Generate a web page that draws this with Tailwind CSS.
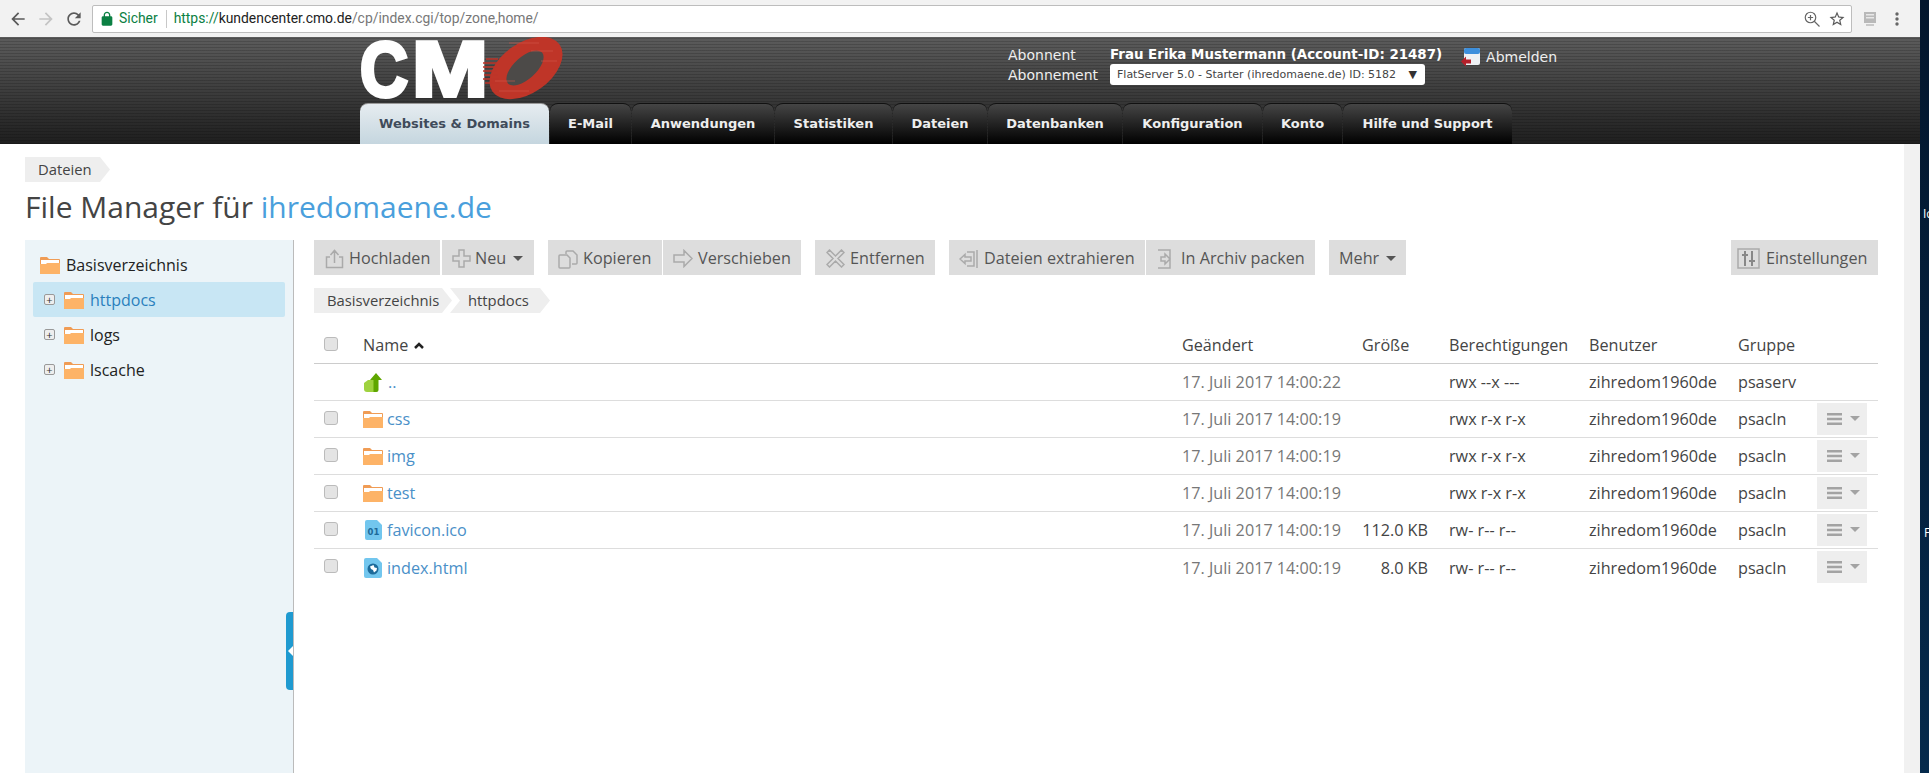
<!DOCTYPE html>
<html lang="de">
<head>
    <meta charset="UTF-8">
    <title>File Manager</title>
    <script src="https://cdn.jsdelivr.net/npm/@tailwindcss/browser@4"></script>
</head>
<body class="h-[773px] overflow-hidden bg-[#04203c] font-['Open_Sans',sans-serif] text-[16px] text-[#444]">
<div class="flex h-[773px]">
    <div class="flex w-[1920px] flex-col">

        <!-- Browser toolbar -->
        <div class="flex h-[37px] items-center bg-[#f2f2f2]">
            <svg class="ml-[8px] h-[20px] w-[20px] fill-[#5a5a5a]" viewBox="0 0 24 24"><path d="M20 11H7.83l5.59-5.59L12 4l-8 8 8 8 1.41-1.41L7.83 13H20v-2z"/></svg>
            <svg class="ml-[8px] h-[20px] w-[20px] fill-[#c4c4c4]" viewBox="0 0 24 24"><path d="M12 4l-1.41 1.41L16.17 11H4v2h12.17l-5.58 5.59L12 20l8-8z"/></svg>
            <svg class="ml-[8px] h-[20px] w-[20px] fill-[#5a5a5a]" viewBox="0 0 24 24"><path d="M17.65 6.35C16.2 4.9 14.21 4 12 4c-4.42 0-7.99 3.58-7.99 8s3.57 8 7.99 8c3.73 0 6.84-2.55 7.73-6h-2.08c-.82 2.33-3.04 4-5.65 4-3.31 0-6-2.69-6-6s2.69-6 6-6c1.66 0 3.14.69 4.22 1.78L13 11h7V4l-2.35 2.35z"/></svg>
            <div class="ml-[8px] flex h-[28px] w-[1760px] items-center rounded-[2px] border border-[#bdbdbd] bg-white font-['Roboto',sans-serif] text-[13.900px]">
                <svg class="ml-[6px] h-[16px] w-[16px] fill-[#0b8043]" viewBox="0 0 24 24"><path d="M18 8h-1V6c0-2.76-2.24-5-5-5S7 3.24 7 6v2H6c-1.1 0-2 .9-2 2v10c0 1.1.9 2 2 2h12c1.1 0 2-.9 2-2V10c0-1.1-.9-2-2-2zM9 6c0-1.66 1.34-3 3-3s3 1.34 3 3v2H9V6z"/></svg>
                <span class="ml-[4px] text-[#0b8043]">Sicher</span>
                <span class="ml-[8px] h-[18px] w-px bg-[#c8c8c8]"></span>
                <span class="ml-[7px] text-[#0b8043]">https://</span><span class="text-[#222]">kundencenter.cmo.de</span><span class="text-[#777]">/cp/index.cgi/top/zone,home/</span>
                <svg class="ml-auto h-[18px] w-[18px] fill-none stroke-[#666] stroke-[1.6]" viewBox="0 0 24 24"><circle cx="10" cy="10" r="7"/><path d="M15 15l7 7M10 6.500v7M6.500 10h7"/></svg>
                <svg class="mr-[5px] ml-[7px] h-[18px] w-[18px] fill-[#5a5a5a]" viewBox="0 0 24 24"><path d="M22 9.240l-7.190-.620L12 2 9.190 8.630 2 9.240l5.460 4.730L5.820 21 12 17.270 18.180 21l-1.630-7.030L22 9.240zM12 15.400l-3.760 2.270 1-4.280-3.320-2.880 4.380-.380L12 6.100l1.710 4.040 4.380.380-3.320 2.880 1 4.280L12 15.400z"/></svg>
            </div>
            <svg class="ml-[11px] h-[16px] w-[14px]" viewBox="0 0 14 16"><rect x="1" y="1" width="12" height="11" fill="#b9b9b9"/><rect x="3" y="3" width="8" height="1.500" fill="#e8e8e8"/><rect x="3" y="6" width="8" height="1.500" fill="#e8e8e8"/><rect x="3" y="13" width="8" height="2" fill="#c9c9c9"/></svg>
            <svg class="ml-[17px] h-[16px] w-[6px] fill-[#666]" viewBox="0 0 6 16"><circle cx="3" cy="3" r="1.700"/><circle cx="3" cy="8" r="1.700"/><circle cx="3" cy="13" r="1.700"/></svg>
        </div>

        <!-- Panel header -->
        <div class="h-[107px] bg-[image:repeating-linear-gradient(0deg,rgba(0,0,0,.16)_0,rgba(0,0,0,.16)_1px,transparent_1px,transparent_3px),linear-gradient(#5c5c5c,#1e1e1e)]">
            <div class="flex h-[66px] pl-[359px]">
                <svg class="h-[64px] w-[204px] shrink-0" viewBox="0 0 204 64">
                    <g font-family="Liberation Sans" font-weight="700" font-size="78" fill="#fff" stroke="#fff" stroke-width="4">
                        <text x="1" y="59" textLength="48" lengthAdjust="spacingAndGlyphs">C</text>
                        <text x="53" y="59" textLength="76" lengthAdjust="spacingAndGlyphs">M</text>
                    </g>
                    <ellipse cx="167" cy="31" rx="41" ry="25" transform="rotate(-35 167 31)" fill="#bf3528"/>
                    <ellipse cx="166" cy="31" rx="23" ry="11" transform="rotate(-42 166 31)" fill="#4c4a48"/>
                    <g stroke="#bf3528" stroke-width="1.500"><path d="M124 30h14M124 34h14M125 38h14M124 42h16M126 46h14M124 26h14M127 22h12"/></g>
                    <g stroke="#d4584a" stroke-width=".6"><path d="M150 6h30M172 14h22M182 24h16M136 44h20M140 54h30"/></g>
                </svg>
                <div class="ml-[445px] grid grid-cols-[102px_auto] content-start pt-[9px] font-['DejaVu_Sans',sans-serif] text-[14px] leading-[18px] text-[#eee]">
                    <span>Abonnent</span>
                    <span class="text-[13.400px] font-bold text-white">Frau Erika Mustermann (Account-ID: 21487)</span>
                    <span class="self-center">Abonnement</span>
                    <span class="flex h-[21px] w-[315px] items-center rounded-[3px] bg-white pl-[7px] text-[11px] whitespace-nowrap text-[#444]">FlatServer 5.0 - Starter (ihredomaene.de) ID: 5182<span class="mr-[8px] ml-auto text-[#333]">▼</span></span>
                </div>
                <div class="ml-[19px] flex h-[30px] items-center self-start pt-[10px] font-['DejaVu_Sans',sans-serif] text-[14px] text-[#eee]">
                    <svg class="h-[20px] w-[20px]" viewBox="0 0 20 20"><rect x="3" y="1" width="16" height="17" rx="2" fill="#eef1f4"/><rect x="3" y="1" width="16" height="6" rx="2" fill="#3d8fdc"/><path d="M0 14.500l5-5v3h5v4H5v3z" fill="#b4202a"/></svg>
                    <span class="ml-[5px]">Abmelden</span>
                </div>
            </div>
            <div class="flex h-[41px] pl-[360px] font-['DejaVu_Sans',sans-serif] text-[13px] font-bold text-[#eee]">
                <span class="flex w-[189px] items-center justify-center rounded-t-[8px] border-t border-[#999] bg-[linear-gradient(#e6ecf0,#c5d6df)] text-[#3f4b5a]">Websites &amp; Domains</span>
                <span class="ml-px flex w-[81px] items-center justify-center rounded-t-[8px] border-t border-[#111] bg-[linear-gradient(#454545,#000)]">E-Mail</span>
                <span class="ml-px flex w-[142px] items-center justify-center rounded-t-[8px] border-t border-[#111] bg-[linear-gradient(#454545,#000)]">Anwendungen</span>
                <span class="ml-px flex w-[117px] items-center justify-center rounded-t-[8px] border-t border-[#111] bg-[linear-gradient(#454545,#000)]">Statistiken</span>
                <span class="ml-px flex w-[94px] items-center justify-center rounded-t-[8px] border-t border-[#111] bg-[linear-gradient(#454545,#000)]">Dateien</span>
                <span class="ml-px flex w-[134px] items-center justify-center rounded-t-[8px] border-t border-[#111] bg-[linear-gradient(#454545,#000)]">Datenbanken</span>
                <span class="ml-px flex w-[139px] items-center justify-center rounded-t-[8px] border-t border-[#111] bg-[linear-gradient(#454545,#000)]">Konfiguration</span>
                <span class="ml-px flex w-[79px] items-center justify-center rounded-t-[8px] border-t border-[#111] bg-[linear-gradient(#454545,#000)]">Konto</span>
                <span class="ml-px flex w-[169px] items-center justify-center rounded-t-[8px] border-t border-[#111] bg-[linear-gradient(#454545,#000)]">Hilfe und Support</span>
            </div>
        </div>

        <!-- Page body + scrollbar -->
        <div class="flex flex-1 overflow-hidden">
            <div class="flex w-[1904px] flex-col bg-white pt-[13px] pr-[26px] pl-[25px]">
                <div class="flex h-[25px] w-[85px] items-center bg-[#eee] pl-[13px] text-[14.800px] [clip-path:polygon(0_0,calc(100%-10px)_0,100%_50%,calc(100%-10px)_100%,0_100%)]">Dateien</div>
                <h1 class="mb-[10px] flex h-[48px] items-center text-[30px] font-normal text-[#444]">File Manager für&nbsp;<span class="text-[#4a9fdc]">ihredomaene.de</span></h1>

                <div class="flex flex-1">
                    <!-- Folder tree -->
                    <div class="relative w-[269px] shrink-0 border-r border-[#bbb] bg-[#ecf4f8] pt-[7px] pl-[8px] text-[#222]">
                        <div class="flex h-[35px] items-center pl-[7px]">
                            <svg class="h-[18px] w-[20px]" viewBox="0 0 20 18"><path d="M0 2a1 1 0 0 1 1-1h6l2 2h10a1 1 0 0 1 1 1v13a1 1 0 0 1-1 1H1a1 1 0 0 1-1-1z" fill="#f09c55"/><path d="M1 4h18v3H8L6 8H1z" fill="#fff"/><path d="M0 8h6l2-1h12v10a1 1 0 0 1-1 1H1a1 1 0 0 1-1-1z" fill="#fdb367"/></svg>
                            <span class="ml-[6px]">Basisverzeichnis</span>
                        </div>
                        <div class="flex h-[35px] w-[252px] items-center rounded-[2px] bg-[#c8e6f4] pl-[11px] text-[#2a80bd]">
                            <span class="flex h-[11px] w-[11px] items-center justify-center rounded-[2px] border border-[#999] bg-[#eee] text-[11px] leading-none text-[#333]">+</span>
                            <svg class="ml-[9px] h-[18px] w-[20px]" viewBox="0 0 20 18"><path d="M0 2a1 1 0 0 1 1-1h6l2 2h10a1 1 0 0 1 1 1v13a1 1 0 0 1-1 1H1a1 1 0 0 1-1-1z" fill="#f09c55"/><path d="M1 4h18v3H8L6 8H1z" fill="#fff"/><path d="M0 8h6l2-1h12v10a1 1 0 0 1-1 1H1a1 1 0 0 1-1-1z" fill="#fdb367"/></svg>
                            <span class="ml-[6px]">httpdocs</span>
                        </div>
                        <div class="flex h-[35px] items-center pl-[11px]">
                            <span class="flex h-[11px] w-[11px] items-center justify-center rounded-[2px] border border-[#999] bg-[#eee] text-[11px] leading-none text-[#333]">+</span>
                            <svg class="ml-[9px] h-[18px] w-[20px]" viewBox="0 0 20 18"><path d="M0 2a1 1 0 0 1 1-1h6l2 2h10a1 1 0 0 1 1 1v13a1 1 0 0 1-1 1H1a1 1 0 0 1-1-1z" fill="#f09c55"/><path d="M1 4h18v3H8L6 8H1z" fill="#fff"/><path d="M0 8h6l2-1h12v10a1 1 0 0 1-1 1H1a1 1 0 0 1-1-1z" fill="#fdb367"/></svg>
                            <span class="ml-[6px]">logs</span>
                        </div>
                        <div class="flex h-[35px] items-center pl-[11px]">
                            <span class="flex h-[11px] w-[11px] items-center justify-center rounded-[2px] border border-[#999] bg-[#eee] text-[11px] leading-none text-[#333]">+</span>
                            <svg class="ml-[9px] h-[18px] w-[20px]" viewBox="0 0 20 18"><path d="M0 2a1 1 0 0 1 1-1h6l2 2h10a1 1 0 0 1 1 1v13a1 1 0 0 1-1 1H1a1 1 0 0 1-1-1z" fill="#f09c55"/><path d="M1 4h18v3H8L6 8H1z" fill="#fff"/><path d="M0 8h6l2-1h12v10a1 1 0 0 1-1 1H1a1 1 0 0 1-1-1z" fill="#fdb367"/></svg>
                            <span class="ml-[6px]">lscache</span>
                        </div>
                        <!-- collapse handle -->
                        <div class="absolute top-[372px] right-0 flex h-[78px] w-[7px] items-center justify-end rounded-l-[4px] bg-[#1f9ad0]">
                            <span class="h-0 w-0 border-y-[5px] border-r-[5px] border-y-transparent border-r-white"></span>
                        </div>
                    </div>

                    <!-- File list -->
                    <div class="ml-[20px] flex-1 text-[16.200px]">
                        <div class="flex h-[35px] text-[#555] [&>div]:pt-[2px]">
                            <div class="flex w-[126px] items-center bg-[#ddd] pl-[11px]">
                                <svg class="mr-[5px] h-[20px] w-[19px] fill-none stroke-[#aaa] stroke-[1.500]" viewBox="0 0 19 20"><path d="M5 8H1.500v10.500h16V8H14M9.500 14V2M5.500 6l4-4.500 4 4.500"/></svg>Hochladen
                            </div>
                            <div class="ml-[2px] flex w-[92px] items-center bg-[#ddd] pl-[10px]">
                                <svg class="mr-[4px] h-[19px] w-[19px] fill-none stroke-[#aaa] stroke-[1.500]" viewBox="0 0 19 19"><path d="M7 1h5v6h6v5h-6v6H7v-6H1V7h6z"/></svg>Neu<span class="ml-[7px] h-0 w-0 border-x-[5px] border-t-[5px] border-x-transparent border-t-[#555]"></span>
                            </div>
                            <div class="ml-[14px] flex w-[114px] items-center bg-[#ddd] pl-[10px]">
                                <svg class="mr-[5px] h-[20px] w-[20px] fill-none stroke-[#aaa] stroke-[1.500]" viewBox="0 0 20 20"><path d="M8 5V3a1 1 0 0 1 1-1h6l4 4v8a1 1 0 0 1-1 1h-4M2 6h7l3 3v9a1 1 0 0 1-1 1H2a1 1 0 0 1-1-1V7a1 1 0 0 1 1-1z"/></svg>Kopieren
                            </div>
                            <div class="ml-px flex w-[138px] items-center bg-[#ddd] pl-[10px]">
                                <svg class="mr-[5px] h-[19px] w-[20px] fill-none stroke-[#aaa] stroke-[1.500]" viewBox="0 0 20 19"><path d="M1 6h10V1.500l8 8-8 8V13H1z"/></svg>Verschieben
                            </div>
                            <div class="ml-[14px] flex w-[120px] items-center bg-[#ddd] pl-[11px]">
                                <svg class="mr-[5px] h-[19px] w-[19px] fill-none stroke-[#aaa] stroke-[1.500]" viewBox="0 0 19 19"><path d="M3.500 1L9.500 7l6-6 2.500 2.500-6 6 6 6-2.500 2.500-6-6-6 6L1 15.500l6-6-6-6z"/></svg>Entfernen
                            </div>
                            <div class="ml-[14px] flex w-[196px] items-center bg-[#ddd] pl-[10px]">
                                <svg class="mr-[6px] h-[20px] w-[19px] fill-none stroke-[#aaa] stroke-[1.500]" viewBox="0 0 19 20"><path d="M8 3h7v14H8M1 10l5-4.500V8h6v4H6v2.500zM18 1v18"/></svg>Dateien extrahieren
                            </div>
                            <div class="ml-px flex w-[169px] items-center bg-[#ddd] pl-[11px]">
                                <svg class="mr-[7px] h-[20px] w-[17px] fill-none stroke-[#aaa] stroke-[1.500]" viewBox="0 0 17 20"><path d="M1 1h12v18H1M4 8h4V5l5 5-5 5v-3H4z"/></svg>In Archiv packen
                            </div>
                            <div class="ml-[14px] flex w-[77px] items-center bg-[#ddd] pl-[10px]">
                                Mehr<span class="ml-[7px] h-0 w-0 border-x-[5px] border-t-[5px] border-x-transparent border-t-[#555]"></span>
                            </div>
                            <div class="ml-auto flex w-[147px] items-center bg-[#ddd] pl-[6px]">
                                <svg class="mr-[6px] h-[21px] w-[23px]" viewBox="0 0 23 21"><rect x="1" y="1" width="21" height="19" fill="none" stroke="#aaa" stroke-width="1.500"/><path d="M8 3v15M15 3v15M5 7h6M12 13h6" stroke="#888" stroke-width="2" fill="none"/></svg>Einstellungen
                            </div>
                        </div>

                        <div class="mt-[13px] flex h-[25px] text-[14.800px]">
                            <div class="flex w-[138px] items-center bg-[#eee] pl-[13px] [clip-path:polygon(0_0,calc(100%-10px)_0,100%_50%,calc(100%-10px)_100%,0_100%)]">Basisverzeichnis</div>
                            <div class="-ml-[2px] flex w-[100px] items-center bg-[#eee] pl-[18px] [clip-path:polygon(0_0,calc(100%-10px)_0,100%_50%,calc(100%-10px)_100%,0_100%,10px_50%)]">httpdocs</div>
                        </div>

                        <table class="mt-[12px] w-full table-fixed text-left [&_td]:pt-[2px] [&_td:first-child]:pt-0 [&_td:last-child]:pt-0 [&_th]:pt-[2px]">
                            <colgroup>
                                <col class="w-[49px]"><col class="w-[819px]"><col class="w-[180px]"><col class="w-[87px]"><col class="w-[140px]"><col class="w-[149px]"><col class="w-[79px]"><col class="w-[61px]">
                            </colgroup>
                            <thead>
                                <tr class="h-[38px] border-b border-[#ccc]">
                                    <th class="pl-[10px] font-normal"><span class="mb-[2px] block h-[14px] w-[14px] rounded-[3px] border border-[#bbb] bg-[#e4e4e4]"></span></th>
                                    <th class="font-normal">Name <span class="ml-[2px] inline-block h-[7px] w-[10px] align-[2px]"><svg class="h-[7px] w-[10px] fill-none stroke-[#222] stroke-[2.500]" viewBox="0 0 10 7"><path d="M1 6l4-4 4 4"/></svg></span></th>
                                    <th class="font-normal">Geändert</th>
                                    <th class="font-normal">Größe</th>
                                    <th class="font-normal">Berechtigungen</th>
                                    <th class="font-normal">Benutzer</th>
                                    <th class="font-normal">Gruppe</th>
                                    <th></th>
                                </tr>
                            </thead>
                            <tbody>
                                <tr class="h-[37px] border-b border-[#ddd]">
                                    <td></td>
                                    <td><span class="flex items-center text-[#4a90c8]"><svg class="mr-[6px] ml-px h-[19px] w-[18px]" viewBox="0 0 18 19"><path d="M0 10l4-3h6v12H3a3 3 0 0 1-3-3z" fill="#9fd23f"/><path d="M12 0l6 7h-3.500v10a2 2 0 0 1-2 2H9.500V7H6z" fill="#5fa600"/></svg>..</span></td>
                                    <td class="text-[#777]">17. Juli 2017 14:00:22</td>
                                    <td class="pr-[21px] text-right"></td>
                                    <td>rwx --x ---</td>
                                    <td>zihredom1960de</td>
                                    <td>psaserv</td>
                                    <td></td>
                                </tr>
                                <tr class="h-[37px] border-b border-[#ddd]">
                                    <td class="pl-[10px]"><span class="mb-[2px] block h-[14px] w-[14px] rounded-[3px] border border-[#bbb] bg-[#e4e4e4]"></span></td>
                                    <td><span class="flex items-center text-[#4a90c8]"><svg class="mr-[4px] h-[18px] w-[20px]" viewBox="0 0 20 18"><path d="M0 2a1 1 0 0 1 1-1h6l2 2h10a1 1 0 0 1 1 1v13a1 1 0 0 1-1 1H1a1 1 0 0 1-1-1z" fill="#f09c55"/><path d="M1 4h18v3H8L6 8H1z" fill="#fff"/><path d="M0 8h6l2-1h12v10a1 1 0 0 1-1 1H1a1 1 0 0 1-1-1z" fill="#fdb367"/></svg>css</span></td>
                                    <td class="text-[#777]">17. Juli 2017 14:00:19</td>
                                    <td class="pr-[21px] text-right"></td>
                                    <td>rwx r-x r-x</td>
                                    <td>zihredom1960de</td>
                                    <td>psacln</td>
                                    <td><span class="flex h-[32px] w-[50px] items-center bg-[#eee] pl-[10px]"><svg class="h-[12px] w-[15px] fill-[#a3a3a3]" viewBox="0 0 15 12"><rect width="15" height="2.500"/><rect y="4.750" width="15" height="2.500"/><rect y="9.500" width="15" height="2.500"/></svg><span class="ml-[8px] h-0 w-0 border-x-[5px] border-t-[5px] border-x-transparent border-t-[#a3a3a3]"></span></span></td>
                                </tr>
                                <tr class="h-[37px] border-b border-[#ddd]">
                                    <td class="pl-[10px]"><span class="mb-[2px] block h-[14px] w-[14px] rounded-[3px] border border-[#bbb] bg-[#e4e4e4]"></span></td>
                                    <td><span class="flex items-center text-[#4a90c8]"><svg class="mr-[4px] h-[18px] w-[20px]" viewBox="0 0 20 18"><path d="M0 2a1 1 0 0 1 1-1h6l2 2h10a1 1 0 0 1 1 1v13a1 1 0 0 1-1 1H1a1 1 0 0 1-1-1z" fill="#f09c55"/><path d="M1 4h18v3H8L6 8H1z" fill="#fff"/><path d="M0 8h6l2-1h12v10a1 1 0 0 1-1 1H1a1 1 0 0 1-1-1z" fill="#fdb367"/></svg>img</span></td>
                                    <td class="text-[#777]">17. Juli 2017 14:00:19</td>
                                    <td class="pr-[21px] text-right"></td>
                                    <td>rwx r-x r-x</td>
                                    <td>zihredom1960de</td>
                                    <td>psacln</td>
                                    <td><span class="flex h-[32px] w-[50px] items-center bg-[#eee] pl-[10px]"><svg class="h-[12px] w-[15px] fill-[#a3a3a3]" viewBox="0 0 15 12"><rect width="15" height="2.500"/><rect y="4.750" width="15" height="2.500"/><rect y="9.500" width="15" height="2.500"/></svg><span class="ml-[8px] h-0 w-0 border-x-[5px] border-t-[5px] border-x-transparent border-t-[#a3a3a3]"></span></span></td>
                                </tr>
                                <tr class="h-[37px] border-b border-[#ddd]">
                                    <td class="pl-[10px]"><span class="mb-[2px] block h-[14px] w-[14px] rounded-[3px] border border-[#bbb] bg-[#e4e4e4]"></span></td>
                                    <td><span class="flex items-center text-[#4a90c8]"><svg class="mr-[4px] h-[18px] w-[20px]" viewBox="0 0 20 18"><path d="M0 2a1 1 0 0 1 1-1h6l2 2h10a1 1 0 0 1 1 1v13a1 1 0 0 1-1 1H1a1 1 0 0 1-1-1z" fill="#f09c55"/><path d="M1 4h18v3H8L6 8H1z" fill="#fff"/><path d="M0 8h6l2-1h12v10a1 1 0 0 1-1 1H1a1 1 0 0 1-1-1z" fill="#fdb367"/></svg>test</span></td>
                                    <td class="text-[#777]">17. Juli 2017 14:00:19</td>
                                    <td class="pr-[21px] text-right"></td>
                                    <td>rwx r-x r-x</td>
                                    <td>zihredom1960de</td>
                                    <td>psacln</td>
                                    <td><span class="flex h-[32px] w-[50px] items-center bg-[#eee] pl-[10px]"><svg class="h-[12px] w-[15px] fill-[#a3a3a3]" viewBox="0 0 15 12"><rect width="15" height="2.500"/><rect y="4.750" width="15" height="2.500"/><rect y="9.500" width="15" height="2.500"/></svg><span class="ml-[8px] h-0 w-0 border-x-[5px] border-t-[5px] border-x-transparent border-t-[#a3a3a3]"></span></span></td>
                                </tr>
                                <tr class="h-[37px] border-b border-[#ddd]">
                                    <td class="pl-[10px]"><span class="mb-[2px] block h-[14px] w-[14px] rounded-[3px] border border-[#bbb] bg-[#e4e4e4]"></span></td>
                                    <td><span class="flex items-center text-[#4a90c8]"><svg class="mr-[4px] ml-[2px] h-[20px] w-[18px]" viewBox="0 0 18 20"><path d="M2 0h10l5 5v13a2 2 0 0 1-2 2H2a2 2 0 0 1-2-2V2a2 2 0 0 1 2-2z" fill="#72c6ee"/><text x="8.500" y="15" text-anchor="middle" font-family="DejaVu Sans" font-size="8.500" font-weight="700" fill="#1c6a9a">01</text></svg>favicon.ico</span></td>
                                    <td class="text-[#777]">17. Juli 2017 14:00:19</td>
                                    <td class="pr-[21px] text-right">112.0 KB</td>
                                    <td>rw- r-- r--</td>
                                    <td>zihredom1960de</td>
                                    <td>psacln</td>
                                    <td><span class="flex h-[32px] w-[50px] items-center bg-[#eee] pl-[10px]"><svg class="h-[12px] w-[15px] fill-[#a3a3a3]" viewBox="0 0 15 12"><rect width="15" height="2.500"/><rect y="4.750" width="15" height="2.500"/><rect y="9.500" width="15" height="2.500"/></svg><span class="ml-[8px] h-0 w-0 border-x-[5px] border-t-[5px] border-x-transparent border-t-[#a3a3a3]"></span></span></td>
                                </tr>
                                <tr class="h-[37px]">
                                    <td class="pl-[10px]"><span class="mb-[2px] block h-[14px] w-[14px] rounded-[3px] border border-[#bbb] bg-[#e4e4e4]"></span></td>
                                    <td><span class="flex items-center text-[#4a90c8]"><svg class="mr-[4px] ml-[1px] h-[20px] w-[19px]" viewBox="0 0 19 20"><path d="M2 0h11l5 5v13a2 2 0 0 1-2 2H2a2 2 0 0 1-2-2V2a2 2 0 0 1 2-2z" fill="#72c6ee"/><circle cx="9" cy="11" r="5.500" fill="#1c6a9a"/><path d="M6 8.500l3.500-1.500 1 2.500 2.500.500-.500 2.500-2.500 2-1-2.500-2-1z" fill="#fff"/></svg>index.html</span></td>
                                    <td class="text-[#777]">17. Juli 2017 14:00:19</td>
                                    <td class="pr-[21px] text-right">8.0 KB</td>
                                    <td>rw- r-- r--</td>
                                    <td>zihredom1960de</td>
                                    <td>psacln</td>
                                    <td><span class="flex h-[32px] w-[50px] items-center bg-[#eee] pl-[10px]"><svg class="h-[12px] w-[15px] fill-[#a3a3a3]" viewBox="0 0 15 12"><rect width="15" height="2.500"/><rect y="4.750" width="15" height="2.500"/><rect y="9.500" width="15" height="2.500"/></svg><span class="ml-[8px] h-0 w-0 border-x-[5px] border-t-[5px] border-x-transparent border-t-[#a3a3a3]"></span></span></td>
                                </tr>
                            </tbody>
                        </table>
                    </div>
                </div>
            </div>
            <div class="w-[16px] bg-[#f1f1f1]"></div>
        </div>
    </div>

    <!-- Sliver of desktop behind the browser -->
    <div class="relative flex-1 overflow-hidden bg-[linear-gradient(#03162c,#052a4c)] text-[12px] text-white">
        <span class="absolute top-[205px] left-[3px]">Ic</span>
        <span class="absolute top-[524px] left-[4px]">F</span>
    </div>
</div>
</body>
</html>
